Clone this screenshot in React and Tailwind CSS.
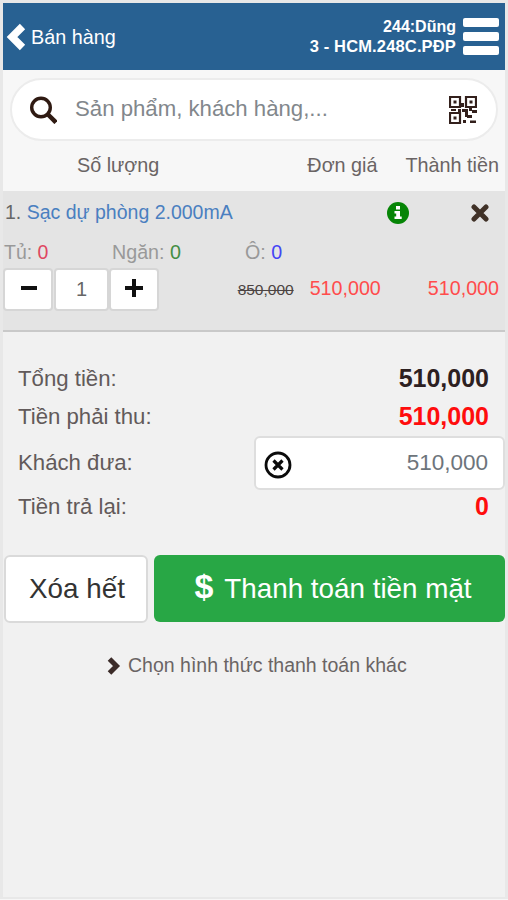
import React, { useState } from "react";

const QrIcon = () => (
  <svg viewBox="0 0 28 28" className="mt-px mr-px h-7 w-7" fill="none" stroke="#33201c" strokeWidth="2.200">
    <path d="M1 1h10v10H1zM17 1h10v10H17zM1 17h10v10H1z" />
    <path
      stroke="none"
      fill="#33201c"
      d="M4.500 4.500h3v3h-3zM20.500 4.500h3v3h-3zM4.500 20.500h3v3h-3zM12 7h3v4h-3zM13 13h6v8h-3v-5h-3zM20 11h3v4h-3zM23 14h5v3h-5zM18 19h5v3h-5zM14 24h3v3h-3zM21 24.500h6v2.500h-6zM9 13h3v3H9zM2 13h5v2H2z"
    />
  </svg>
);

const Header = () => (
  <div className="flex h-[67px] items-center bg-[#286192] text-white">
    <svg viewBox="0 0 20 28" className="ml-[3px] mt-px h-7 w-5" fill="none" stroke="white" strokeWidth="7.500">
      <path d="M16.500 3.500L6 14L16.500 24.500" />
    </svg>
    <span className="mt-[2px] ml-[5px] text-[19.800px]">Bán hàng</span>
    <div className="ml-auto text-right text-[16.500px] leading-5 font-bold">
      <div className="text-[16px]">244:Dũng</div>
      <div className="-mt-px tracking-[0.15px]">3 - HCM.248C.PĐP</div>
    </div>
    <div className="mr-[6px] ml-[7px] flex flex-col gap-[5px]">
      <span className="h-[9px] w-9 rounded-xs bg-white"></span>
      <span className="h-[9px] w-9 rounded-xs bg-white"></span>
      <span className="h-[9px] w-9 rounded-xs bg-white"></span>
    </div>
  </div>
);

const SearchBar = () => (
  <div className="mx-[7px] mt-2 flex h-[63px] items-center rounded-full border-2 border-[#ececec] bg-white pr-[18px] pl-[17px]">
    <svg viewBox="0 0 28 28" className="mt-px h-7 w-7 shrink-0" fill="none" stroke="#2f1a12">
      <circle cx="12" cy="11.500" r="9.300" strokeWidth="3.400" />
      <path d="M18.500 18L27 26.500" strokeWidth="4.500" />
    </svg>
    <input
      type="text"
      placeholder="Sản phẩm, khách hàng,..."
      className="ml-[18px] min-w-0 flex-1 pb-[2px] text-[22.200px] outline-none placeholder:text-[#82878c]"
    />
    <QrIcon />
  </div>
);

const CartItem = ({ quantity, setQuantity }) => (
  <div className="h-[141px] border-b-2 border-[#c9c9c9] bg-[#e4e4e4] text-[20px] text-[#999]">
    <div className="flex h-[41px] items-center">
      <span className="mt-[2px] ml-[2px] text-[19.500px] text-[#666]">
        1. <span className="text-[#4a7fc0]">Sạc dự phòng 2.000mA</span>
      </span>
      <svg viewBox="0 0 22 22" className="mt-[2px] mr-[62px] ml-auto h-[22px] w-[22px]">
        <circle cx="11" cy="11" r="11" fill="#068506" />
        <path d="M9 4h4v3.500H9zM7.500 9H13v5.500h1.700v2.500H7.500v-2.500h1.700v-3H7.500z" fill="white" />
      </svg>
      <svg
        viewBox="0 0 18 18"
        className="mt-[2px] mr-4 h-[18px] w-[18px]"
        stroke="#403127"
        strokeWidth="5"
        strokeLinecap="round"
      >
        <path d="M3 3L15 15M15 3L3 15" />
      </svg>
    </div>
    <div className="flex h-9 items-center pt-[5px]">
      <span className="w-[109px] pl-px text-[19.500px]">
        Tủ: <span className="text-[#df4760]">0</span>
      </span>
      <span className="w-[133px] text-[19.700px]">
        Ngăn: <span className="text-[#438d43]">0</span>
      </span>
      <span className="text-[19.700px]">
        Ô: <span className="text-[#4545f5]">0</span>
      </span>
    </div>
    <div className="flex h-[43px] items-center">
      <button
        onClick={() => setQuantity(Math.max(1, quantity - 1))}
        className="flex h-[43px] w-[50px] items-center justify-center rounded-sm border-2 border-[#d6d6d6] bg-white"
      >
        <span className="mb-1 ml-px h-1 w-4 bg-[#111]"></span>
      </button>
      <span className="ml-px flex h-[43px] w-[55px] items-center justify-center rounded-sm border-2 border-[#d6d6d6] bg-white pb-[2px] text-[#666]">
        {quantity}
      </span>
      <button
        onClick={() => setQuantity(quantity + 1)}
        className="flex h-[43px] w-[50px] items-center justify-center rounded-sm border-2 border-[#d6d6d6] bg-white"
      >
        <svg viewBox="0 0 18 18" className="mb-1 h-[18px] w-[18px]" stroke="#111" strokeWidth="4">
          <path d="M0 9H18M9 0V18" />
        </svg>
      </button>
      <span className="ml-auto text-[15.500px] text-[#4c4443] line-through">850,000</span>
      <span className="ml-4 pb-px text-[19.700px] text-[#ff4c4c]">510,000</span>
      <span className="mr-[6px] ml-[47px] pb-px text-[19.700px] text-[#ff4c4c]">510,000</span>
    </div>
  </div>
);

const App = () => {
  const [quantity, setQuantity] = useState(1);
  const [cash, setCash] = useState("510,000");

  return (
    <div className="h-[900px] w-[508px] overflow-hidden bg-[#f6f6f6] font-['Liberation_Sans',sans-serif]">
      <div className="h-[899px] border-[3px] border-b-2 border-[#e8e8e8] bg-[#f1f1f1]">
        <Header />
        <div className="flow-root h-[121px] bg-[#f7f7f7]">
          <SearchBar />
          <div className="flex h-[50px] items-center text-[19.800px] text-[#6a6464]">
            <span className="ml-[74px]">Số lượng</span>
            <span className="ml-auto">Đơn giá</span>
            <span className="mr-[6px] ml-[28px]">Thành tiền</span>
          </div>
        </div>
        <CartItem quantity={quantity} setQuantity={setQuantity} />

        <div className="pt-[28px] text-[22.200px] text-[#625a5a]">
          <div className="flex h-[38px] items-center justify-between pr-4 pl-[15px]">
            <span>Tổng tiền:</span>
            <span className="text-[25px] font-bold text-[#2d2021]">510,000</span>
          </div>
          <div className="flex h-[38px] items-center justify-between pr-4 pl-[15px]">
            <span>Tiền phải thu:</span>
            <span className="text-[25px] font-bold text-[#ff0d0d]">510,000</span>
          </div>
          <div className="flex h-[54px] items-center justify-between pl-[15px]">
            <span>Khách đưa:</span>
            <div className="flex h-[54px] w-[251px] items-center rounded-md border-2 border-[#dedede] bg-white pr-[15px] pl-2">
              <button onClick={() => setCash("")}>
                <svg viewBox="0 0 28 28" className="mt-1 h-7 w-7" fill="none" stroke="#0b0b0b">
                  <circle cx="14" cy="14" r="12" strokeWidth="2.800" />
                  <path d="M9.500 9.500L18.500 18.500M18.500 9.500L9.500 18.500" strokeWidth="3.200" />
                </svg>
              </button>
              <input
                type="text"
                value={cash}
                onChange={(e) => setCash(e.target.value)}
                className="min-w-0 flex-1 text-right text-[22.500px] text-[#6d747b] outline-none"
              />
            </div>
          </div>
          <div className="flex h-[34px] items-center justify-between pr-4 pl-[15px]">
            <span>Tiền trả lại:</span>
            <span className="text-[25px] font-bold text-[#ff0d0d]">0</span>
          </div>
        </div>

        <div className="mt-[31px] flex gap-[6px] pl-px text-[27.800px]">
          <button className="h-[68px] w-[144px] rounded-md border-2 border-[#dadada] bg-white pl-[2px] text-[#333]">
            Xóa hết
          </button>
          <button className="flex h-[67px] flex-1 items-center justify-center rounded-md bg-[#28a745] pl-[7px] text-white">
            <span className="mr-[11px] mb-1 text-[34px] font-bold">$</span>
            Thanh toán tiền mặt
          </button>
        </div>

        <div className="mt-[28px] flex items-center text-[19.500px] text-[#6a6464]">
          <svg viewBox="0 0 14 18" className="mr-[7px] ml-[104px] h-[18px] w-[14px]" fill="none" stroke="#3b2b28" strokeWidth="5">
            <path d="M2.500 2L9.500 9L2.500 16" />
          </svg>
          Chọn hình thức thanh toán khác
        </div>
      </div>
    </div>
  );
};

export default App;
